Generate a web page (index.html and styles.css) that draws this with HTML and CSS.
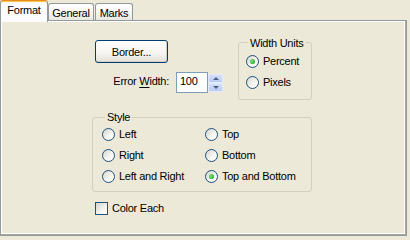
FILE: index.html
```html
<!DOCTYPE html>
<html>
<head>
<meta charset="utf-8">
<link rel="stylesheet" href="styles.css">
</head>
<body>
<div class="window">
  <div class="tabs">
    <div class="tab tab-active">Format</div>
    <div class="tab tab-general">General</div>
    <div class="tab tab-marks">Marks</div>
  </div>
  <div class="panel">
    <div class="content">
      <div class="left-col">
        <button class="btn">Border...</button>
        <div class="field-row">
          <label class="field-label">Error <u>W</u>idth:</label>
          <div class="input">100</div>
          <div class="spinner">
            <div class="spin spin-up"></div>
            <div class="spin spin-down"></div>
          </div>
        </div>
      </div>
      <div class="group group-units">
        <div class="group-title">Width Units</div>
        <div class="options">
          <div class="option"><span class="radio checked"></span>Percent</div>
          <div class="option"><span class="radio"></span>Pixels</div>
        </div>
      </div>
      <div class="group group-style">
        <div class="group-title">Style</div>
        <div class="options style-grid">
          <div class="option"><span class="radio"></span>Left</div>
          <div class="option"><span class="radio"></span>Top</div>
          <div class="option"><span class="radio"></span>Right</div>
          <div class="option"><span class="radio"></span>Bottom</div>
          <div class="option"><span class="radio"></span>Left and Right</div>
          <div class="option"><span class="radio checked"></span>Top and Bottom</div>
        </div>
      </div>
      <div class="check-row"><span class="checkbox"></span>Color Each</div>
    </div>
  </div>
</div>
</body>
</html>
```

FILE: styles.css
```css
body {
  margin: 0;
  background: #ece9d8;
  font: 11px/13px "Liberation Sans", Arial, sans-serif;
  letter-spacing: -0.25px;
  color: #000;
}

.window {
  width: 410px;
  height: 239px;
  overflow: hidden;
}

/* ---- tabs ---- */
.tabs {
  display: flex;
  align-items: flex-end;
  height: 20px;
}

.tab {
  box-sizing: border-box;
  height: 17px;
  padding-top: 2px;
  line-height: 14px;
  text-align: center;
  white-space: nowrap;
  border: 1px solid #919b9c;
  border-bottom: 0;
  border-radius: 3px 3px 0 0;
  background: linear-gradient(#ffffff, #f6f5f1 55%, #e9e7df);
}

.tab-active {
  position: relative;
  z-index: 1;
  width: 48px;
  height: 22px;
  margin-bottom: -2px;
  border-top: 1px solid #e68b2c;
  background: #fcfcfe;
  box-shadow: inset 0 1px 0 #ffc73c;
}

.tab-general {
  width: 46px;
}

.tab-marks {
  width: 38px;
  margin-left: 1px;
}

/* ---- panel ---- */
.panel {
  box-sizing: border-box;
  width: 407px;
  height: 216px;
  border: 1px solid #919b9c;
  box-shadow: inset -1px -1px 0 #aca899, inset -2px -2px 0 #ffffff, inset 1px 1px 0 #ffffff;
}

.content {
  display: grid;
  grid-template-columns: 146px 74px;
  align-items: start;
  padding: 19px 0 0 91px;
}

/* ---- left column ---- */
.btn {
  display: block;
  box-sizing: border-box;
  width: 73px;
  height: 23px;
  margin: 0 0 0 3px;
  padding: 2px 0 0;
  font: inherit;
  letter-spacing: inherit;
  line-height: 19px;
  color: #000;
  text-align: center;
  border: 1px solid #003c74;
  border-radius: 3px;
  background: linear-gradient(#ffffff, #f5f4ef 60%, #e3e0d6);
  box-shadow: inset -1px -1px 0 #d6d0c5;
}

.field-row {
  display: flex;
  margin-top: 9px;
}

.field-label {
  width: 77px;
  margin: 3px 7px 0 0;
  text-align: right;
  white-space: nowrap;
}

.field-label u {
  text-underline-offset: 2px;
}

.input {
  box-sizing: border-box;
  width: 32px;
  height: 21px;
  padding-left: 3px;
  line-height: 17px;
  border: 1px solid #7f9db9;
  background: #ffffff;
}

.spinner {
  display: flex;
  flex-direction: column;
  width: 15px;
  height: 18px;
  margin-top: 2px;
}

.spin {
  box-sizing: border-box;
  flex: 1;
  display: flex;
  align-items: center;
  justify-content: center;
  border: 1px solid #e3eafc;
  border-radius: 2px;
  background: linear-gradient(#d5e0fb, #b9cbf3);
}

.spin::after {
  content: "";
  width: 0;
  height: 0;
  border-left: 3px solid transparent;
  border-right: 3px solid transparent;
}

.spin-up::after {
  border-bottom: 3px solid #4d6185;
}

.spin-down::after {
  border-top: 3px solid #4d6185;
}

/* ---- group boxes ---- */
.group {
  box-sizing: border-box;
  border: 1px solid #d0d0bf;
  border-radius: 3px;
}

.group-title {
  width: fit-content;
  padding: 0 2px;
  background: #ece9d8;
  white-space: nowrap;
}

.group-units {
  height: 58px;
  margin-top: 2px;
}

.group-units .group-title {
  margin: -6px 0 0 9px;
}

.group-units .options {
  padding: 1px 0 0 7px;
}

.group-style {
  grid-column: 1 / span 2;
  height: 75px;
  margin-top: 17px;
}

.group-style .group-title {
  margin: -7px 0 0 12px;
}

.style-grid {
  display: grid;
  grid-template-columns: 103px auto;
  padding-left: 9px;
}

.option {
  display: flex;
  align-items: center;
  gap: 4px;
  height: 21px;
  white-space: nowrap;
}

.radio {
  position: relative;
  flex: none;
  box-sizing: border-box;
  width: 13px;
  height: 13px;
  border: 1px solid #1c5180;
  border-radius: 50%;
  background: linear-gradient(135deg, #d6d5cd, #f6f6f3 60%, #ffffff);
}

.radio.checked::after {
  content: "";
  position: absolute;
  left: 3px;
  top: 3px;
  width: 5px;
  height: 5px;
  border-radius: 50%;
  background: radial-gradient(circle at 40% 40%, #8ee68e, #3ebc3e 50%, #1a9a1a);
}

/* ---- checkbox ---- */
.check-row {
  grid-column: 1 / span 2;
  display: flex;
  align-items: center;
  gap: 4px;
  margin: 10px 0 0 3px;
  height: 13px;
  white-space: nowrap;
}

.checkbox {
  flex: none;
  box-sizing: border-box;
  width: 13px;
  height: 13px;
  border: 1px solid #1c5180;
  background: linear-gradient(135deg, #d6d5cd, #f4f4f0 60%, #ffffff);
}
```
